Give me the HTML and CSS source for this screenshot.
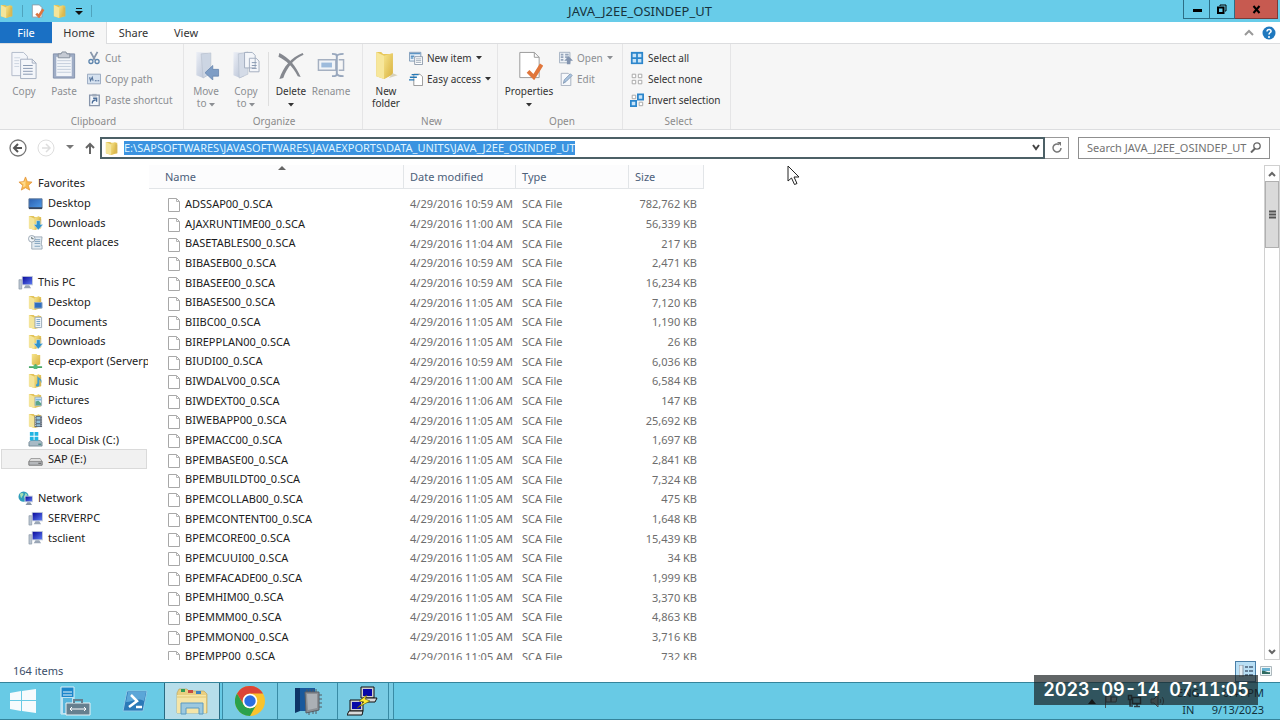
FILE: index.html
```html
<!DOCTYPE html>
<html lang="en">
<head>
<meta charset="utf-8">
<title>JAVA_J2EE_OSINDEP_UT</title>
<link rel="stylesheet" href="styles.css">
</head>
<body>
<svg class="defs" aria-hidden="true">
  <defs>
    <linearGradient id="gold" x1="0" y1="0" x2="1" y2="1"><stop offset="0" stop-color="#f6e48c"/><stop offset="1" stop-color="#d8b03c"/></linearGradient>
    <linearGradient id="pale" x1="0" y1="0" x2="1" y2="1"><stop offset="0" stop-color="#eceff6"/><stop offset="1" stop-color="#b3bed2"/></linearGradient>
    <linearGradient id="screen" x1="0" y1="0" x2="1" y2="1"><stop offset="0" stop-color="#0a0a9c"/><stop offset="1" stop-color="#5a78f0"/></linearGradient>
    <linearGradient id="desk" x1="0" y1="0" x2="1" y2="1"><stop offset="0" stop-color="#2c5fb0"/><stop offset="1" stop-color="#4f9be8"/></linearGradient>
    <symbol id="folder" viewBox="0 0 16 16"><path d="M1 1h5l1 1h7v12l-7 2-6-2z" fill="#e2c35a"/><path d="M7 3l5-2v12l-5 3z" fill="url(#gold)"/><path d="M12 4h2v10h-2z" fill="#d5b657"/><path d="M1 1l6 3v12l-6-2z" fill="#f4e59a"/></symbol>
    <symbol id="file" viewBox="0 0 14 16"><path d="M1.500 1.500h8l3 3v10h-11z" fill="#fff" stroke="#a8a8a8"/><path d="M9.500 1.500v3h3" fill="none" stroke="#b4b4b4"/></symbol>
    <symbol id="pc" viewBox="0 0 16 16"><path d="M1 5h3v10H1z" fill="#b9c4d0" stroke="#7d8b9b" stroke-width=".6"/><path d="M4 1h12v10H4z" fill="#c8d0dc"/><path d="M5 2h10v8H5z" fill="url(#screen)"/><path d="M8 11h4l2 3H6z" fill="#9aa6b6"/></symbol>
    <symbol id="desktop" viewBox="0 0 16 16"><path d="M1 3h14v10H1z" fill="url(#desk)" stroke="#5b7598"/><path d="M1 12h14v2H1z" fill="#35445e"/></symbol>
    <symbol id="down" viewBox="0 0 16 16"><use href="#folder"/><path d="M9 6h4v4h3l-5 6-5-6h3z" fill="#2f93cf" stroke="#e4f3fb" stroke-width=".5"/></symbol>
    <symbol id="fdesk" viewBox="0 0 16 16"><use href="#folder"/><path d="M7 8h8v6H7z" fill="#2f6fc0" stroke="#8fa6c2"/></symbol>
    <symbol id="fdoc" viewBox="0 0 16 16"><use href="#folder"/><path d="M7.500 3.500h7v11h-7z" fill="#f4f8fb" stroke="#9aaaba"/><path d="M9 6h4M9 8h4M9 10h4M9 12h4" stroke="#6f9fc8"/></symbol>
    <symbol id="fmusic" viewBox="0 0 16 16"><use href="#folder"/><path d="M10 3c1 3 6 3 4 8 0-3-2-4-2-4v6c-1 3-5 1-3-1l1-1z" fill="#3d9ed0"/></symbol>
    <symbol id="fpic" viewBox="0 0 16 16"><use href="#folder"/><path d="M7.500 4.500h7v9h-7z" fill="#e8f4fa" stroke="#9db0bf"/><path d="M8 13V9l3-1 3 3v2z" fill="#5aa58a"/><path d="M8 6h6v2H8z" fill="#7db9e4"/></symbol>
    <symbol id="fvid" viewBox="0 0 16 16"><use href="#folder"/><path d="M7 3h8v12H7z" fill="#525d6b"/><path d="M9 4h4v3H9zM9 8h4v3H9zM9 12h4v2H9z" fill="#8fc0dc"/><path d="M8 3v12M14 3v12" stroke="#e7ebef" stroke-dasharray="1 1"/></symbol>
    <symbol id="fnet" viewBox="0 0 16 16"><path d="M4 0h5l1 1h3v10l-5 2-4-2z" fill="url(#gold)"/><path d="M8 11v3M1 14h14" stroke="#48a866" stroke-width="2"/><path d="M6 12h4v4H6z" fill="#54ba7b"/></symbol>
    <symbol id="drive" viewBox="0 0 16 16"><path d="M3 7h10l2 3v4H1v-4z" fill="#e3e3e3" stroke="#858585" stroke-width=".8"/><path d="M1 10h14v4H1z" fill="#b5b8bb" stroke="#777" stroke-width=".8"/><path d="M11 12h3" stroke="#555"/></symbol>
    <symbol id="windrive" viewBox="0 0 16 16"><path d="M3 9h10l2 2v4H1v-4z" fill="#a8bac5" stroke="#667d8b" stroke-width=".8"/><path d="M11 13h3" stroke="#227766"/><path d="M2 0h4v4H2zM7 0h4v4H7zM2 5h4v4H2zM7 5h4v4H7z" fill="#20b4e2"/></symbol>
    <symbol id="recent" viewBox="0 0 16 16"><path d="M4 2h11l-1 9h1v4H4V9z" fill="#e4ecf2" stroke="#8999a8" stroke-width=".8"/><path d="M7 5h6M7 7h6M7 9h6M7 12h6" stroke="#7ea0bc"/><circle cx="4" cy="4" r="3.500" fill="#f4f7fa" stroke="#8696a4" stroke-width=".8"/><path d="M4 2v2h2" fill="none" stroke="#556666"/></symbol>
    <symbol id="star" viewBox="0 0 16 16"><path d="M8 1l2 5 5 .5-4 3.500 1.500 5L8 12.500 3.500 15 5 10 1 6.500 6 6z" fill="#f7b74c" stroke="#e2933a" stroke-width=".8"/><path d="M8 3v8L5 12l1-3-3-2 4-1z" fill="#ffd98a"/></symbol>
    <symbol id="net" viewBox="0 0 16 16"><circle cx="6" cy="6" r="5.500" fill="#2f9dba"/><path d="M2 3c3-2 5 0 3 2s0 3-2 2zM6 8l2-6 2 2z" fill="#a5e0b4"/><path d="M7 5h9v7H7z" fill="#c8d0dc"/><path d="M8 6h7v5H8z" fill="url(#screen)"/><path d="M10 12h3l2 3H8z" fill="#8896a8"/></symbol>
    <symbol id="caret" viewBox="0 0 6 4"><path d="M0 0h6L3 3.500z" fill="currentColor"/></symbol>
    <symbol id="pages" viewBox="0 0 28 30"><path d="M1.500 1.500h12l4 4v20h-16z" fill="#f4f6fa" stroke="#b2bbca"/><path d="M4 7h6M4 10h5M4 13h5M4 16h5" stroke="#ccd4e0"/><path d="M10.500 8.500h12l4 4v16h-16z" fill="#f4f6fa" stroke="#a5afc1"/><path d="M22.500 8.500v4h4" fill="none" stroke="#a5afc1"/><path d="M13 15h10M13 18h10M13 21h10M13 24h10" stroke="#8797b0"/></symbol>
  </defs>
</svg>

<header class="titlebar">
  <div class="quick">
    <svg class="i14"><use href="#folder"/></svg><span class="bar"></span>
    <button aria-label="Properties"><svg class="i14" viewBox="0 0 16 16"><path d="M1.500 1h8l3 3v11h-11z" fill="#fff" stroke="#8e9aa5"/><path d="M6 11l3 3 5-8" fill="none" stroke="#dc7440" stroke-width="3"/></svg></button>
    <button aria-label="New folder"><svg class="i14"><use href="#folder"/></svg></button>
    <button aria-label="Customize toolbar"><svg width="8" height="7" viewBox="0 0 8 7"><path d="M1 0h6v1H1zM0 3h8L4 7z" fill="#111"/></svg></button><span class="bar"></span>
  </div>
  <h1>JAVA_J2EE_OSINDEP_UT</h1>
  <div class="winctl">
    <button class="min" aria-label="Minimize"><svg width="10" height="10"><path d="M1 5h9v3H1z"/></svg></button>
    <button class="max" aria-label="Restore"><svg width="10" height="10"><path d="M3 2V1h6v6H8" fill="none" stroke="#000"/><path d="M1 3.500h5.500V9H1z" fill="none" stroke="#000" stroke-width="2"/></svg></button>
    <button class="close" aria-label="Close"><svg width="9" height="9"><path d="M1.500 1l6 7M7.500 1l-6 7" stroke="#000" stroke-width="2"/></svg></button>
  </div>
</header>

<nav class="tabs">
  <button class="file">File</button><button class="home">Home</button><button class="share">Share</button><button class="view">View</button>
  <span class="grow"></span>
  <button class="tool" aria-label="Collapse ribbon"><svg width="10" height="8"><path d="M1 6l4-4 4 4" fill="none" stroke="#999" stroke-width="2"/></svg></button>
  <button class="tool" aria-label="Help"><svg width="14" height="14"><circle cx="7" cy="7" r="6.500" fill="#1f78be"/><path d="M5 5.500c0-3 4.500-2.500 4 0-.2 1-2 1.200-2 3" fill="none" stroke="#fff" stroke-width="1.500"/><circle cx="7" cy="11" r="1" fill="#fff"/></svg></button>
</nav>

<section class="ribbon">
  <div class="group clipboard">
    <div class="tools">
      <button class="big off"><svg class="i28"><use href="#pages"/></svg>Copy</button>
      <button class="big off"><svg class="i28" viewBox="0 0 28 30"><path d="M3 3h22v25H3z" fill="#9fadc6" stroke="#8492ac"/><path d="M6 6h16v20H6z" fill="#f2f5f9"/><path d="M7 10h14M7 13h14M7 16h14M7 19h14M7 22h14" stroke="#c3cddc"/><path d="M8 3h3l1-2h4l1 2h3v4H8z" fill="#c5cad3" stroke="#868f9c"/></svg>Paste</button>
      <div class="stack">
        <button class="small off"><svg class="i14" viewBox="0 0 16 16"><path d="M4 1l5 9M12 1l-5 9" stroke="#8897ac" stroke-width="2"/><circle cx="4.500" cy="12" r="2.300" fill="none" stroke="#5c84ad" stroke-width="1.500"/><circle cx="11.500" cy="12" r="2.300" fill="none" stroke="#5c84ad" stroke-width="1.500"/></svg>Cut</button>
        <button class="small off"><svg class="i14" viewBox="0 0 16 16"><path d="M.5 2.500h15v11H.5z" fill="#d5e1ef" stroke="#91a2ba"/><path d="M3 6l1 4 2-4 1 4M9 10h2M12 10h2" fill="none" stroke="#53729a" stroke-width="1.200"/></svg>Copy path</button>
        <button class="small off"><svg class="i14" viewBox="0 0 16 16"><path d="M3 2.500h11v12H3z" fill="#f3f6fa" stroke="#8795ab" stroke-width="1.500"/><path d="M6 1h5v3H6z" fill="#a0abba"/><path d="M6 12c0-3 1-4 4-4M7 6h4v4" fill="none" stroke="#4c6e99" stroke-width="1.500"/></svg>Paste shortcut</button>
      </div>
    </div>
    <h2>Clipboard</h2>
  </div>
  <div class="group organize">
    <div class="tools">
      <button class="big off"><svg class="i28" viewBox="0 0 28 30"><path d="M4 1l12 1v23l-5 3-7-3z" fill="url(#pale)"/><path d="M9 3l10-1v21l-8 5z" fill="#ccd5e3" stroke="#b4bdcb" stroke-width=".6"/><path d="M27 19v7h-6v4l-8-7.500 8-7.500v4z" fill="#7e9dc5" stroke="#6483ad" stroke-width=".8"/></svg><span>Move<br>to <svg class="caret"><use href="#caret"/></svg></span></button>
      <button class="big off"><svg class="i28" viewBox="0 0 28 30"><path d="M1 1l11 1v24l-4 2-7-3z" fill="url(#pale)"/><path d="M6 3l10-2v23l-9 4z" fill="#d4dbe7" stroke="#b4bdcb" stroke-width=".6"/><path d="M12.500 1.500h8l3 3v13h-11zM17.500 7.500h7l3 3v11h-10z" fill="#f4f6fa" stroke="#a4aec0"/><path d="M20 12h5M20 15h5M20 18h5" stroke="#8797b0"/></svg><span>Copy<br>to <svg class="caret"><use href="#caret"/></svg></span></button>
      <i class="divider"></i>
      <button class="big"><svg class="i28" viewBox="0 0 28 30"><path d="M2 2c10 5 17 13 22 25l-3-1C15 15 9 10 1 6z" fill="#85888f"/><path d="M27 4C17 8 10 17 6 28l-4 1C6 16 14 7 26 2z" fill="#85888f"/></svg><span>Delete<br><svg class="caret"><use href="#caret"/></svg></span></button>
      <button class="big off"><svg class="i28" viewBox="0 0 28 30"><path d="M1 9h18v11H1z" fill="#f1f4f8" stroke="#a5b0c1" stroke-width="1.500"/><path d="M4 12h11v5H4z" fill="#9dbbdc"/><path d="M15 3c5 0 5 1 5 3v17c0 2 0 3-5 3M27 3c-5 0-7 1-7 3M20 23c0 2 2 3 7 3" fill="none" stroke="#98a7bd" stroke-width="2"/><path d="M22 9h5v11h-5" fill="none" stroke="#a5b0c1" stroke-width="1.500"/></svg>Rename</button>
    </div>
    <h2>Organize</h2>
  </div>
  <div class="group new">
    <div class="tools">
      <button class="big"><svg class="i28" viewBox="0 0 28 30"><path d="M4 1h5l2 2h10v21l-9 5-8-3z" fill="#e7c75a"/><path d="M12 5l9-3v22l-9 5z" fill="url(#gold)"/><path d="M4 1l8 4v24l-8-3z" fill="#f7e79b"/><path d="M21 23l5 2-9 3z" fill="#d8d1b8"/></svg><span>New<br>folder</span></button>
      <div class="stack">
        <button class="small"><svg class="i14" viewBox="0 0 16 16"><path d="M.5 1.500h13v10H.5z" fill="#e8f1f9" stroke="#7592b2"/><path d="M1 3h12M2 6h4M2 8h3" stroke="#5e95c4" stroke-width="1.500"/><path d="M6.500 6.500h9v9h-9z" fill="#fff" stroke="#8391a3"/><path d="M8 9h6M8 11h6M8 13h6" stroke="#97a5b5"/></svg>New item<svg class="caret"><use href="#caret"/></svg></button>
        <button class="small"><svg class="i14" viewBox="0 0 16 16"><path d="M5.500 2.500h7l3 3v10h-10z" fill="#fff" stroke="#8c8c8c"/><path d="M3 3h8M1 6h8M0 9h6" stroke="#2579b8" stroke-width="1.500"/></svg>Easy access<svg class="caret"><use href="#caret"/></svg></button>
      </div>
    </div>
    <h2>New</h2>
  </div>
  <div class="group open">
    <div class="tools">
      <button class="big wide"><svg class="i28" viewBox="0 0 28 30"><path d="M4.500 1.500h15l5 5v21h-20z" fill="#fff" stroke="#999"/><path d="M19.500 1.500v5h5" fill="none" stroke="#999"/><path d="M13 21l6 6 8-13" fill="none" stroke="#e0763b" stroke-width="4"/></svg><span>Properties<br><svg class="caret"><use href="#caret"/></svg></span></button>
      <div class="stack">
        <button class="small off"><svg class="i14" viewBox="0 0 16 16"><path d="M.5 1.500h12v12H.5z" fill="#edf1f6" stroke="#9eabbd"/><path d="M2 4h3M7 4h4M2 7h3M7 7h4M2 10h3" stroke="#94a4ba" stroke-width="2"/><path d="M11 6l5 5h-3v4H9v-4H6z" fill="#8394af"/></svg>Open<svg class="caret"><use href="#caret"/></svg></button>
        <button class="small off"><svg class="i14" viewBox="0 0 16 16"><path d="M2.500 1.500h8l3 3v11h-11z" fill="#f6f8fb" stroke="#a1acbc"/><path d="M5 13l1-4 7-7 2 2-7 7z" fill="#abc5e0" stroke="#8097b2"/></svg>Edit</button>
      </div>
    </div>
    <h2>Open</h2>
  </div>
  <div class="group select">
    <div class="tools">
      <div class="stack">
        <button class="small"><svg class="i14" viewBox="0 0 16 16"><path d="M1 1h14v14H1z" fill="#2c86cc"/><path d="M3 3h4v4H3zM9 3h4v4H9zM3 9h4v4H3zM9 9h4v4H9z" fill="#c9e4f8"/></svg>Select all</button>
        <button class="small"><svg class="i14" viewBox="0 0 16 16"><path d="M2.500 2.500h4v4h-4zM9.500 2.500h4v4h-4zM2.500 9.500h4v4h-4zM9.500 9.500h4v4h-4z" fill="#fff" stroke="#a0a0a0"/></svg>Select none</button>
        <button class="small"><svg class="i14" viewBox="0 0 16 16"><path d="M2.500 2.500h4v4h-4zM10.500 10.500h4v4h-4z" fill="#fff" stroke="#a0a0a0"/><path d="M9 1.500h6v6H9zM1 9h6v6H1z" fill="#c9e4f8" stroke="#2c86cc" stroke-width="2"/></svg>Invert selection</button>
      </div>
    </div>
    <h2>Select</h2>
  </div>
</section>

<section class="address">
  <button class="nav" aria-label="Back"><svg width="18" height="18"><circle cx="9" cy="9" r="8" fill="#fff" stroke="#767676" stroke-width="1.300"/><path d="M13 9H5M9 5L5 9l4 4" fill="none" stroke="#555" stroke-width="2"/></svg></button>
  <button class="nav" aria-label="Forward"><svg width="18" height="18"><circle cx="9" cy="9" r="8" fill="#fff" stroke="#dedede"/><path d="M5 9h8M9 5l4 4-4 4" fill="none" stroke="#dedede" stroke-width="1.500"/></svg></button>
  <button class="nav slim" aria-label="Recent locations"><svg width="8" height="5"><path d="M0 0h8L4 4z" fill="#777"/></svg></button>
  <button class="nav slim" aria-label="Up"><svg width="10" height="12"><path d="M5 12V2M1 6l4-4 4 4" fill="none" stroke="#666" stroke-width="2"/></svg></button>
  <div class="path">
    <svg class="i14"><use href="#folder"/></svg>
    <input type="text" aria-label="Address" value="E:\SAPSOFTWARES\JAVASOFTWARES\JAVAEXPORTS\DATA_UNITS\JAVA_J2EE_OSINDEP_UT">
    <span class="grow"></span>
    <button aria-label="Previous locations"><svg width="8" height="7"><path d="M1 1l3 4 3-4" fill="none" stroke="#444" stroke-width="2"/></svg></button>
  </div>
  <button class="refresh" aria-label="Refresh"><svg width="12" height="12"><path d="M8 2.500A4 4 0 1 0 10 6" fill="none" stroke="#777" stroke-width="1.500"/><path d="M6 0h4v4z" fill="#777"/></svg></button>
  <div class="search">
    <input type="text" aria-label="Search" placeholder="Search JAVA_J2EE_OSINDEP_UT">
    <svg width="11" height="11"><circle cx="7" cy="4" r="3.200" fill="none" stroke="#666" stroke-width="1.300"/><path d="M5 6.500L1 10.500" stroke="#666" stroke-width="2"/></svg>
  </div>
</section>

<main>
  <nav class="tree">
    <ul>
      <li class="root"><svg class="i15"><use href="#star"/></svg>Favorites</li>
      <li><svg class="i15"><use href="#desktop"/></svg>Desktop</li>
      <li><svg class="i15"><use href="#down"/></svg>Downloads</li>
      <li><svg class="i15"><use href="#recent"/></svg>Recent places</li>
    </ul>
    <ul>
      <li class="root"><svg class="i15"><use href="#pc"/></svg>This PC</li>
      <li><svg class="i15"><use href="#fdesk"/></svg>Desktop</li>
      <li><svg class="i15"><use href="#fdoc"/></svg>Documents</li>
      <li><svg class="i15"><use href="#down"/></svg>Downloads</li>
      <li><svg class="i15"><use href="#fnet"/></svg>ecp-export (Serverpc)</li>
      <li><svg class="i15"><use href="#fmusic"/></svg>Music</li>
      <li><svg class="i15"><use href="#fpic"/></svg>Pictures</li>
      <li><svg class="i15"><use href="#fvid"/></svg>Videos</li>
      <li><svg class="i15"><use href="#windrive"/></svg>Local Disk (C:)</li>
      <li class="current"><svg class="i15"><use href="#drive"/></svg>SAP (E:)</li>
    </ul>
    <ul>
      <li class="root"><svg class="i15"><use href="#net"/></svg>Network</li>
      <li><svg class="i15"><use href="#pc"/></svg>SERVERPC</li>
      <li><svg class="i15"><use href="#pc"/></svg>tsclient</li>
    </ul>
  </nav>
  <div class="files">
    <table>
      <colgroup><col class="c-name"><col class="c-date"><col class="c-type"><col class="c-size"></colgroup>
      <thead><tr><th>Name<svg class="sort" width="8" height="4"><path d="M0 4h8L4 0z" fill="#666"/></svg></th><th>Date modified</th><th>Type</th><th>Size</th></tr></thead>
      <tbody>
        <tr><td><svg><use href="#file"/></svg>ADSSAP00_0.SCA</td><td>4/29/2016 10:59 AM</td><td>SCA File</td><td>782,762 KB</td></tr>
        <tr><td><svg><use href="#file"/></svg>AJAXRUNTIME00_0.SCA</td><td>4/29/2016 11:00 AM</td><td>SCA File</td><td>56,339 KB</td></tr>
        <tr><td><svg><use href="#file"/></svg>BASETABLES00_0.SCA</td><td>4/29/2016 11:04 AM</td><td>SCA File</td><td>217 KB</td></tr>
        <tr><td><svg><use href="#file"/></svg>BIBASEB00_0.SCA</td><td>4/29/2016 10:59 AM</td><td>SCA File</td><td>2,471 KB</td></tr>
        <tr><td><svg><use href="#file"/></svg>BIBASEE00_0.SCA</td><td>4/29/2016 10:59 AM</td><td>SCA File</td><td>16,234 KB</td></tr>
        <tr><td><svg><use href="#file"/></svg>BIBASES00_0.SCA</td><td>4/29/2016 11:05 AM</td><td>SCA File</td><td>7,120 KB</td></tr>
        <tr><td><svg><use href="#file"/></svg>BIIBC00_0.SCA</td><td>4/29/2016 11:05 AM</td><td>SCA File</td><td>1,190 KB</td></tr>
        <tr><td><svg><use href="#file"/></svg>BIREPPLAN00_0.SCA</td><td>4/29/2016 11:05 AM</td><td>SCA File</td><td>26 KB</td></tr>
        <tr><td><svg><use href="#file"/></svg>BIUDI00_0.SCA</td><td>4/29/2016 10:59 AM</td><td>SCA File</td><td>6,036 KB</td></tr>
        <tr><td><svg><use href="#file"/></svg>BIWDALV00_0.SCA</td><td>4/29/2016 11:00 AM</td><td>SCA File</td><td>6,584 KB</td></tr>
        <tr><td><svg><use href="#file"/></svg>BIWDEXT00_0.SCA</td><td>4/29/2016 11:06 AM</td><td>SCA File</td><td>147 KB</td></tr>
        <tr><td><svg><use href="#file"/></svg>BIWEBAPP00_0.SCA</td><td>4/29/2016 11:05 AM</td><td>SCA File</td><td>25,692 KB</td></tr>
        <tr><td><svg><use href="#file"/></svg>BPEMACC00_0.SCA</td><td>4/29/2016 11:05 AM</td><td>SCA File</td><td>1,697 KB</td></tr>
        <tr><td><svg><use href="#file"/></svg>BPEMBASE00_0.SCA</td><td>4/29/2016 11:05 AM</td><td>SCA File</td><td>2,841 KB</td></tr>
        <tr><td><svg><use href="#file"/></svg>BPEMBUILDT00_0.SCA</td><td>4/29/2016 11:05 AM</td><td>SCA File</td><td>7,324 KB</td></tr>
        <tr><td><svg><use href="#file"/></svg>BPEMCOLLAB00_0.SCA</td><td>4/29/2016 11:05 AM</td><td>SCA File</td><td>475 KB</td></tr>
        <tr><td><svg><use href="#file"/></svg>BPEMCONTENT00_0.SCA</td><td>4/29/2016 11:05 AM</td><td>SCA File</td><td>1,648 KB</td></tr>
        <tr><td><svg><use href="#file"/></svg>BPEMCORE00_0.SCA</td><td>4/29/2016 11:05 AM</td><td>SCA File</td><td>15,439 KB</td></tr>
        <tr><td><svg><use href="#file"/></svg>BPEMCUUI00_0.SCA</td><td>4/29/2016 11:05 AM</td><td>SCA File</td><td>34 KB</td></tr>
        <tr><td><svg><use href="#file"/></svg>BPEMFACADE00_0.SCA</td><td>4/29/2016 11:05 AM</td><td>SCA File</td><td>1,999 KB</td></tr>
        <tr><td><svg><use href="#file"/></svg>BPEMHIM00_0.SCA</td><td>4/29/2016 11:05 AM</td><td>SCA File</td><td>3,370 KB</td></tr>
        <tr><td><svg><use href="#file"/></svg>BPEMMM00_0.SCA</td><td>4/29/2016 11:05 AM</td><td>SCA File</td><td>4,863 KB</td></tr>
        <tr><td><svg><use href="#file"/></svg>BPEMMON00_0.SCA</td><td>4/29/2016 11:05 AM</td><td>SCA File</td><td>3,716 KB</td></tr>
        <tr><td><svg><use href="#file"/></svg>BPEMPP00_0.SCA</td><td>4/29/2016 11:05 AM</td><td>SCA File</td><td>732 KB</td></tr>
      </tbody>
    </table>
  </div>
  <div class="scroll">
    <button aria-label="Scroll up"><svg width="8" height="6"><path d="M1 5l3-3 3 3" fill="none" stroke="#666" stroke-width="2"/></svg></button>
    <div class="thumb"><svg width="7" height="9"><path d="M0 1.500h7M0 4.500h7M0 7.500h7" stroke="#555" stroke-width="2"/></svg></div>
    <span class="grow"></span>
    <button aria-label="Scroll down"><svg width="8" height="6"><path d="M1 1l3 3 3-3" fill="none" stroke="#666" stroke-width="2"/></svg></button>
  </div>
</main>

<footer class="status">
  <span>164 items</span><span class="grow"></span>
  <button class="details" aria-label="Details view"><svg width="14" height="12"><path d="M0 0h4v12H0z" fill="#e6eef4" stroke="#8c9aa8"/><path d="M6 2h3M10 2h4M6 6h3M10 6h4M6 10h3M10 10h4" stroke="#4a6078" stroke-width="1.300"/></svg></button>
  <button class="thumbs" aria-label="Large icons view"><svg width="12" height="10"><path d="M.5.5h11v9H.5z" fill="#eef6f8" stroke="#aeb8bd"/><path d="M2 2h8v3H2z" fill="#68b2d2"/><path d="M2 5c3-1 5 2 8 1v2H2z" fill="#2f6b62"/></svg></button>
</footer>

<footer class="taskbar">
  <button class="t-start" aria-label="Start"><svg width="26" height="24"><path d="M0 4l11-2v9H0zM12 2l14-2v11H12zM0 12h11v10L0 20zM12 12h14v12l-14-2z" fill="#f6fbfd"/></svg></button>
  <button class="t-plain" aria-label="Server Manager"><svg width="31" height="30"><path d="M1 1h13v27H1z" fill="#1c86cb" stroke="#d9eff8"/><path d="M3 6h9M3 9h9" stroke="#e6f5fb"/><path d="M1 11h13v17H1z" fill="#bfe3f2"/><path d="M3 12h9v15H3z" fill="#58b5dc"/><path d="M6 17h24v12H6z" fill="#66808f" stroke="#e9f2f5"/><path d="M14 17v-3h8v3" fill="none" stroke="#66808f" stroke-width="2"/><path d="M10 23h16M12 21l-2 2 2 2M24 21l2 2-2 2" fill="none" stroke="#fff"/></svg></button>
  <button class="t-plain" aria-label="PowerShell"><svg width="26" height="22"><path d="M5 1h20l-4 20H1z" fill="#2b79b8" stroke="#8bc7e6"/><path d="M6 2h18l-2 9c-7-4-12 1-18 1z" fill="#5ba6d8"/><path d="M9 5l6 6-8 6M14 17h6" fill="none" stroke="#fff" stroke-width="2.500"/></svg></button>
  <button class="t-app active" aria-label="File Explorer"><svg width="32" height="28"><path d="M1 6l2-4h8l2 2h15l3 3v19H1z" fill="#e9cf80" stroke="#bb9e55" stroke-width=".6"/><path d="M5 2h4v3H5z" fill="#319b54"/><path d="M12 3h5v3h-5z" fill="#c74c42"/><path d="M20 4h5v3h-5z" fill="#3d82be"/><path d="M1 8h29v18H1z" fill="#f5e5a7"/><path d="M1 10h29" stroke="#e0c672"/><path d="M5 27V16h22v11h-4v-6H10v6z" fill="#9cc9df" stroke="#5a9ac2"/></svg></button>
  <button class="t-app" aria-label="Chrome"><svg width="30" height="30" viewBox="0 0 30 30"><circle cx="15" cy="15" r="15" fill="#f9c32d"/><path d="M2 7.500A15 15 0 0 1 28 7.500H15a7.500 7.500 0 0 0-6.500 11z" fill="#db4437"/><path d="M2 7.500A15 15 0 0 0 15 30l6.500-11.500a7.500 7.500 0 0 1-13 0z" fill="#2ba14b"/><circle cx="15" cy="15" r="7.300" fill="#fff"/><circle cx="15" cy="15" r="5.700" fill="#2c6fe0"/></svg></button>
  <button class="t-app wide-app" aria-label="Configuration tool"><svg width="28" height="28"><path d="M1 1h20v23H1z" fill="#19599c"/><path d="M1 1h5v23l-5 2z" fill="#0e3566"/><path d="M11 5h14v18l-13 3z" fill="#8b8f94" stroke="#5a5f66"/><path d="M13 7h10v14l-9 2z" fill="#abb0b5"/><path d="M13 2v3M16 2v3M19 2v3M22 2v3M25 8h3M25 12h3M25 16h3M25 20h3M15 25v3M19 24v3M22 24v3" stroke="#555b61"/></svg></button>
  <button class="t-app t-putty" aria-label="PuTTY"><svg width="32" height="30"><path d="M14 1h13v11H14zM3 14h13v11H3z" fill="#cfcfcf" stroke="#111"/><path d="M16 3h9v7h-9zM5 16h9v7H5z" fill="#0808a8"/><path d="M16 12h14l-2 4H15zM2 25h14l-1 4H0z" fill="#dadada" stroke="#111"/><path d="M20 9l-8 6 5 1-7 6 13-7-5-2z" fill="#ffeb33" stroke="#5b5200" stroke-width=".6"/></svg></button>
  <span class="edge"></span>
  <span class="grow"></span>
  <div class="tray">
    <svg width="8" height="5"><path d="M0 5h8L4 0z" fill="#111"/></svg>
    <svg width="15" height="15"><path d="M1.500 1v13M2 2h5v6H2zM7 3h6l-1 5H7z" fill="#9ab7c0" stroke="#44575f"/></svg>
    <svg width="15" height="15"><path d="M5.500 3.500h8v6h-8zM7 12.500h6M10 10v2M1.500 1.500h3v4h-3zM3 6v6h3" fill="none" stroke="#2c3d43" stroke-width="1.500"/></svg>
    <svg width="15" height="15"><path d="M1 5h3l4-4v12L4 9H1z" fill="#8aa1a9" stroke="#40545c"/><path d="M10 5c1 1 1 3 0 4M12 3c2 2 2 6 0 8" fill="none" stroke="#40545c"/></svg>
    <p class="lang">ENG<br>IN</p>
    <p class="clock">6:41 PM<br>9/13/2023</p>
  </div>
</footer>

<div class="stamp">2023-09-14&nbsp; 07:11:05</div>
<svg class="pointer" width="13" height="21" viewBox="0 0 13 21"><path d="M1 1v15l3.500-3 3 6.500 2.500-1-3-6.500h5z" fill="#fff" stroke="#222"/></svg>
</body>
</html>
```

FILE: styles.css
```css
* { box-sizing: border-box; }
body {
  margin: 0;
  height: 100vh;
  display: flex;
  flex-direction: column;
  overflow: hidden;
  background: #fff;
  color: #222;
  font: 11px/12px "Noto Sans", "Open Sans", sans-serif;
}
button { border: 0; padding: 0; background: none; font: inherit; color: inherit; display: flex; align-items: center; justify-content: center; }
input { font: inherit; border: 0; padding: 0; outline: 0; }
h1, h2, p, ul { margin: 0; padding: 0; font-weight: 400; }
svg { flex: none; }
.defs { position: absolute; width: 0; height: 0; }
.grow { flex: 1; }
.i14 { width: 14px; height: 14px; }
.i15 { width: 15px; height: 15px; }
.i28 { width: 28px; height: 29px; }
.caret { width: 6px; height: 4px; }

.titlebar { height: 22px; flex: none; display: grid; grid-template-columns: 1fr auto 1fr; background: #68cce9; }
.quick { display: flex; align-items: center; gap: 8px; }
.bar { width: 1px; height: 12px; background: #4fa3bd; }
.titlebar h1 { font-size: 13px; line-height: 22px; color: #17333d; }
.winctl { display: flex; justify-content: flex-end; align-items: flex-start; padding-right: 2px; }
.winctl button { height: 19px; border: 1px solid #2c6e86; border-top: 0; }
.winctl .min { width: 27px; }
.winctl .max { width: 25px; border-left: 0; }
.winctl .close { width: 43px; border-left: 0; background: #c75a50; border-color: #7c3b38; }

.tabs { height: 22px; flex: none; display: flex; border-bottom: 1px solid #dcdddf; color: #333; padding-right: 1px; }
.tabs .file { width: 52px; background: #1a70c4; color: #fff; }
.tabs .home { width: 55px; height: 22px; background: #f6f6f6; border-right: 1px solid #dcdddf; }
.tabs .share { width: 53px; }
.tabs .view { width: 52px; }
.tabs .tool { width: 20px; }

.ribbon { flex: none; display: flex; background: #f6f6f6; border-bottom: 1px solid #dcdddf; color: #333; font-size: 10px; }
.group { display: flex; flex-direction: column; height: 85px; padding: 4px 0 1px 4px; border-right: 1px solid #e5e5e6; }
.clipboard { width: 184px; }
.organize { width: 179px; padding-left: 2px; }
.new { width: 135px; padding-left: 3px; }
.open { width: 125px; }
.select { width: 108px; }
.tools { flex: 1; display: flex; }
.group h2 { font-size: 10px; line-height: 14px; text-align: center; color: #8b8b8b; }
.big { width: 40px; flex-direction: column; justify-content: flex-start; gap: 5px; padding-top: 3px; }
.big.wide { width: 54px; }
.off { color: #8c8f93; }
.stack { display: flex; flex-direction: column; align-items: flex-start; gap: 1px; padding-left: 3px; }
.small { height: 20px; gap: 4px; white-space: nowrap; }
.divider { width: 1px; height: 54px; margin: 4px 2px; background: #dedede; }

.address { flex: none; display: flex; align-items: center; height: 35px; padding: 0 10px 0 4px; }
.nav { width: 28px; }
.nav.slim { width: 20px; }
.path { flex: 1; display: flex; align-items: center; height: 22px; border: 2px solid #4c6066; padding: 0 3px; gap: 5px; }
.path input { field-sizing: content; height: 14px; background: #3b93e0; color: #dff3ff; }
.path button { width: 9px; }
.refresh { width: 24px; height: 22px; border: 1px solid #999; border-left: 0; margin-right: 9px; }
.search { width: 192px; height: 22px; display: flex; align-items: center; border: 1px solid #8f8f8f; padding: 0 8px; }
.search input { flex: 1; min-width: 0; }
.search input::placeholder { color: #727272; opacity: 1; }

main { flex: 1; min-height: 0; display: flex; overflow: hidden; }
.tree { width: 148px; flex: none; padding-top: 8px; overflow: hidden; }
.tree ul { list-style: none; margin-bottom: 20px; }
.tree ul + ul { margin-bottom: 19px; }
.tree li { height: 20px; display: flex; align-items: center; gap: 5px; padding-left: 28px; white-space: nowrap; }
.tree li:nth-child(3n) { height: 19px; }
.tree .root { padding-left: 18px; }
.tree .current { margin: 0 1px; padding-left: 27px; background: #f1f1f1; outline: 1px solid #dadada; outline-offset: -1px; }

.files { flex: 1; overflow: hidden; padding-left: 1px; }
table { width: 555px; table-layout: fixed; border-collapse: separate; border-spacing: 0; }
.c-name { width: 255px; }
.c-date { width: 112px; }
.c-type { width: 113px; }
.c-size { width: 75px; }
th { height: 24px; padding: 0 6px; text-align: left; font-weight: 400; color: #4c607a; background: #fcfcfd; border: solid #e2e5e8; border-width: 0 1px 1px 0; }
th:first-child { padding-left: 16px; position: relative; }
.sort { position: absolute; left: 129px; top: 1px; }
tbody::before { content: ""; display: block; height: 5px; }
td { height: 20px; padding: 0 7px 0 6px; white-space: nowrap; color: #6d6d6d; }
tr:nth-child(3n) td { height: 19px; }
td:first-child { padding-left: 18px; color: #1c1c1c; }
td:last-child { text-align: right; }
td svg { width: 14px; height: 16px; margin: -3px 4px -3px 0; vertical-align: middle; }

.scroll { width: 16px; flex: none; display: flex; flex-direction: column; border: 1px solid #d0d0d0; }
.scroll button { height: 15px; }
.thumb { height: 67px; background: #dadada; border: 1px solid #b0b0b0; display: flex; align-items: center; justify-content: center; }

.status { flex: none; height: 22px; display: flex; align-items: center; padding: 0 4px 0 13px; color: #3a4d68; }
.details { width: 21px; height: 21px; background: #b9dff5; border: 1px solid #4a7fa8; }
.thumbs { width: 20px; }

.taskbar { flex: none; height: 38px; display: flex; background: #68cae5; border: solid #35849b; border-width: 1px 0; }
.t-start { width: 46px; }
.t-plain { width: 59px; }
.t-app { width: 56px; border-right: 1px solid #398ba5; background: #78cbe3; }
.t-app.active { background: #b7deea; border: 1px solid #286b83; border-width: 0 1px; margin-right: 2px; }
.t-app.active + .t-app { border-left: 1px solid #398ba5; }
.wide-app { width: 60px; }
.t-putty { width: 51px; }
.edge { width: 5px; border-right: 1px solid #398ba5; background: #78cbe3; }
.tray { display: flex; align-items: center; gap: 8px; padding-right: 16px; color: #12313c; line-height: 17px; }
.lang { width: 23px; margin: 0 4px; text-align: center; }
.clock { text-align: right; }

.stamp { position: absolute; right: 22px; bottom: 15px; width: 224px; height: 30px; background: rgba(22, 28, 30, .68); color: #fff; font: 600 18px/30px Inter, sans-serif; font-variant-numeric: tabular-nums; text-align: center; white-space: nowrap; }
.pointer { position: absolute; left: 787px; top: 165px; }
```
